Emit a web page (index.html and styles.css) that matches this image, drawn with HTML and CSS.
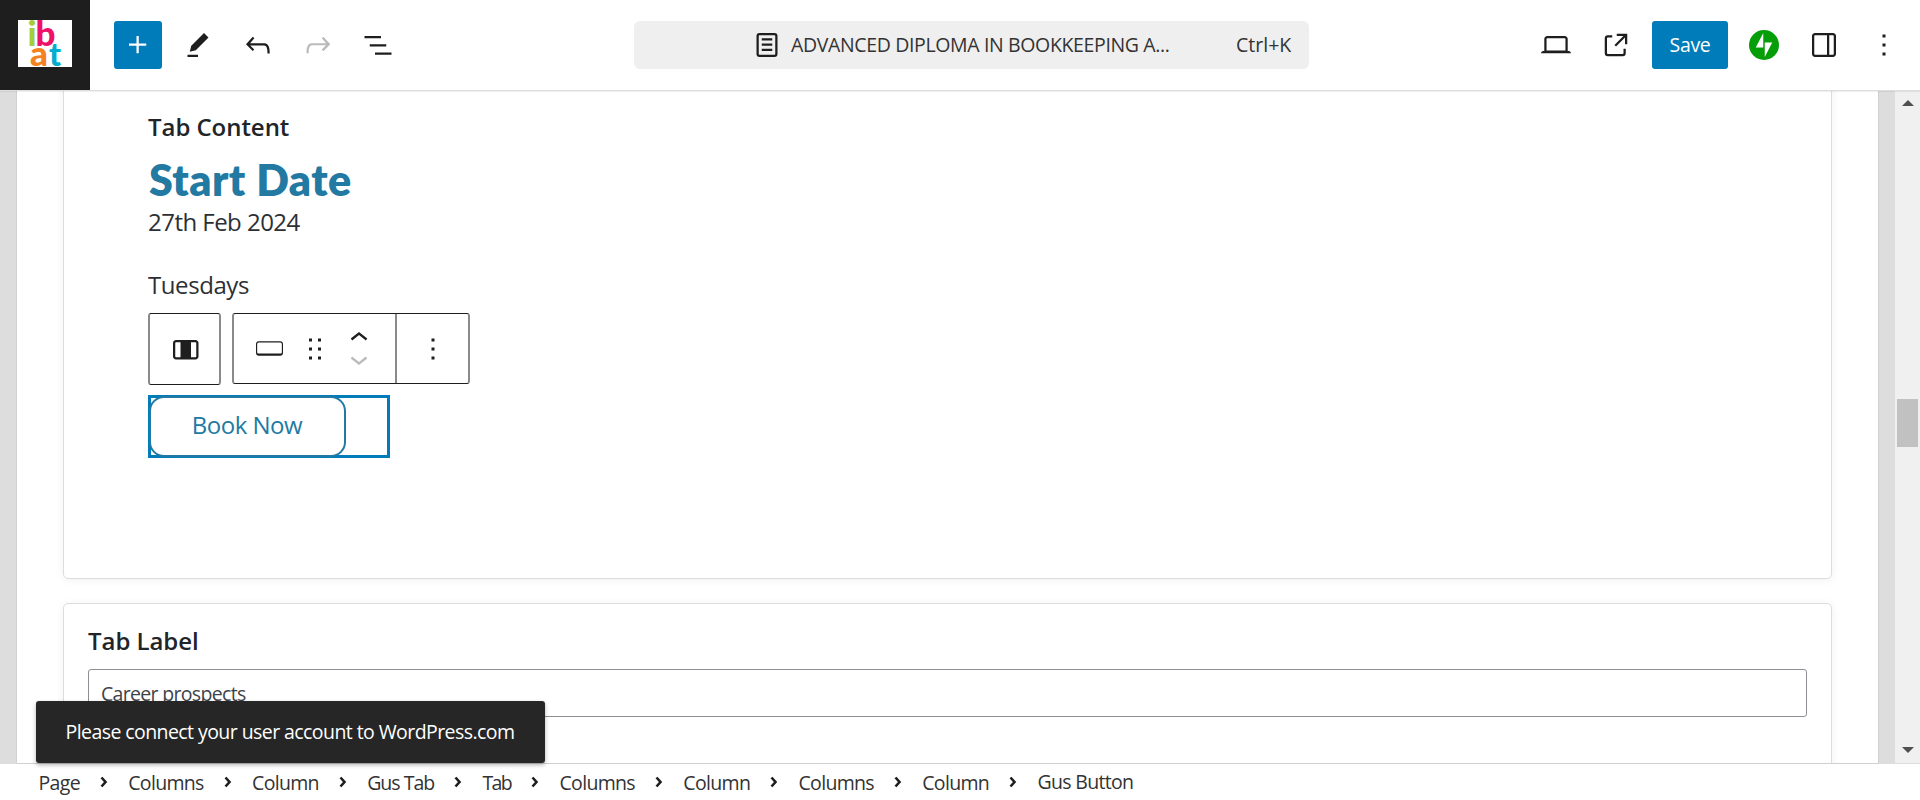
FILE: index.html
```html
<!DOCTYPE html>
<html lang="en">
<head>
<meta charset="utf-8">
<title>Editor</title>
<link rel="stylesheet" href="styles.css">
</head>
<body>
<div class="editor">
  <header class="header">
    <a class="site-logo">
      <svg width="54" height="47" viewBox="0 0 54 47">
        <rect width="54" height="47" fill="#fff"/>
        <g class="logo-letters">
          <text x="9.500" y="26" fill="#a4ce39">i</text>
          <text x="17.500" y="26" fill="#ee1168">b</text>
          <text x="12" y="46" fill="#f58220">a</text>
          <text class="logo-t" x="31" y="46" fill="#00aed0">t</text>
        </g>
      </svg>
    </a>
    <div class="tools">
      <button class="inserter"><svg class="icon" viewBox="0 0 24 24"><path d="M11 12.500V17.500H12.500V12.500H17.500V11H12.500V6H11V11H6V12.500H11Z"/></svg></button>
      <svg class="icon" viewBox="0 0 24 24"><path d="m19 7-3-3-8.500 8.500-1 4 4-1L19 7Zm-7 11.500H5V20h7v-1.500Z"/></svg>
      <svg class="icon" viewBox="0 0 24 24"><path d="M18.300 11.700c-.6-.6-1.400-.9-2.300-.9H6.700l2.900-3.300-1.100-1-4.500 5L8.500 16l1-1-2.700-2.700H16c.5 0 .9.2 1.300.5 1 1 1 3.400 1 4.500v.3h1.500v-.2c0-1.500 0-4.300-1.500-5.700z"/></svg>
      <svg class="icon disabled" viewBox="0 0 24 24"><path d="M15.600 6.500l-1.100 1 2.900 3.300H8c-.9 0-1.700.3-2.300.9-1.400 1.500-1.400 4.200-1.400 5.600v.2h1.500v-.3c0-1.100 0-3.500 1-4.500.3-.3.7-.5 1.300-.5h9.200L14.500 15l1.100 1.100 4.600-4.600-4.600-5z"/></svg>
      <svg class="icon" viewBox="0 0 24 24"><path d="M3 6h11v1.500H3V6Zm3.500 5.500h11V13h-11v-1.500ZM21 17H10v1.500h11V17Z"/></svg>
    </div>
    <div class="command">
      <svg class="icon" viewBox="0 0 24 24"><path d="M15.500 7.500h-7V9h7V7.500Zm-7 3.500h7v1.500h-7V11Zm7 3.500h-7V16h7v-1.500Z"/><path d="M17 4H7a2 2 0 0 0-2 2v12a2 2 0 0 0 2 2h10a2 2 0 0 0 2-2V6a2 2 0 0 0-2-2ZM7 5.500h10a.5.5 0 0 1 .5.5v12a.5.5 0 0 1-.5.5H7a.5.5 0 0 1-.5-.5V6a.5.5 0 0 1 .5-.5Z"/></svg>
      <span class="doc-title">ADVANCED DIPLOMA IN BOOKKEEPING A...</span>
      <span class="shortcut">Ctrl+K</span>
    </div>
    <div class="actions">
      <svg class="icon" viewBox="0 0 24 24"><path d="M20.500 16h-.7V8c0-1.100-.9-2-2-2H6.200c-1.100 0-2 .9-2 2v8h-.7c-.8 0-1.500.7-1.500 1.500h20c0-.8-.7-1.500-1.500-1.500zM5.700 8c0-.3.2-.5.5-.5h11.600c.3 0 .5.2.5.5v7.600H5.700V8z"/></svg>
      <svg class="icon" viewBox="0 0 24 24"><path d="M19.500 4.500h-7V6h4.440l-5.970 5.970 1.060 1.060L18 7.060v4.440h1.500v-7Zm-13 1a2 2 0 0 0-2 2v10a2 2 0 0 0 2 2h10a2 2 0 0 0 2-2v-3H17v3a.5.5 0 0 1-.5.5h-10a.5.5 0 0 1-.5-.5v-10a.5.5 0 0 1 .5-.5h3V5.500h-3Z"/></svg>
      <button class="save"><span>Save</span></button>
      <svg class="jetpack" viewBox="0 0 32 32"><circle cx="16" cy="16" r="16" fill="#069e08"/><path fill="#fff" d="M15.200 18.600H7.200l8-15.500zM16.800 28.900V13.400h8z"/></svg>
      <svg class="icon" viewBox="0 0 24 24"><path d="M18 4H6c-1.100 0-2 .9-2 2v12c0 1.100.9 2 2 2h12c1.100 0 2-.9 2-2V6c0-1.100-.9-2-2-2zm-4 14.500H6c-.3 0-.5-.2-.5-.5V6c0-.3.2-.5.5-.5h8v13zm4.500-.5c0 .3-.2.5-.5.5h-2.500v-13H18c.3 0 .5.2.5.5v12z"/></svg>
      <svg class="icon" viewBox="0 0 24 24"><path d="M13 19h-2v-2h2v2zm0-6h-2v-2h2v2zm0-6h-2V5h2v2z"/></svg>
    </div>
  </header>

  <div class="workspace">
    <main class="canvas">
      <section class="card card-content">
        <div class="label">Tab Content</div>
        <h2 class="heading">Start Date</h2>
        <p class="text date">27th Feb 2024</p>
        <p class="text days">Tuesdays</p>
        <div class="block-toolbar">
          <div class="tb-parent"><svg class="icon" viewBox="0 0 24 24"><path d="M19 6H6c-1.100 0-2 .9-2 2v9c0 1.100.9 2 2 2h13c1.100 0 2-.9 2-2V8c0-1.100-.9-2-2-2zM6 17.500c-.3 0-.5-.2-.5-.5V8c0-.3.2-.5.5-.5h3v10H6zm13.500-.5c0 .3-.2.5-.5.5h-3v-10h3c.3 0 .5.2.5.5v9z"/></svg></div>
          <div class="tb-main">
            <div class="tb-group">
              <svg class="block-icon" width="27" height="15" viewBox="0 0 28 15"><path fill-rule="evenodd" d="M3 0h22a3 3 0 0 1 3 3v9a3 3 0 0 1-3 3H3a3 3 0 0 1-3-3V3a3 3 0 0 1 3-3Zm0 1.200A1.700 1.700 0 0 0 1.200 3v8A1.500 1.500 0 0 0 3 12.600h22a1.500 1.500 0 0 0 1.800-1.600V3A1.700 1.700 0 0 0 25 1.200Z"/></svg>
              <svg class="icon drag" viewBox="0 0 24 24"><path d="M8 7h2V5H8v2zm0 6h2v-2H8v2zm0 6h2v-2H8v2zm6-14v2h2V5h-2zm0 8h2v-2h-2v2zm0 6h2v-2h-2v2z"/></svg>
              <div class="movers">
                <svg width="18" height="9" viewBox="6 8 12 6"><path d="M6.500 12.400L12 8l5.500 4.400-.9 1.200L12 10l-4.500 3.600-1-1.200z"/></svg>
                <svg class="disabled" width="18" height="9" viewBox="6 10 12 6"><path d="M17.500 11.600L12 16l-5.500-4.400.9-1.200L12 14l4.500-3.600 1 1.200z"/></svg>
              </div>
            </div>
            <div class="tb-more"><svg class="icon" viewBox="0 0 24 24"><path d="M13 19h-2v-2h2v2zm0-6h-2v-2h2v2zm0-6h-2V5h2v2z"/></svg></div>
          </div>
        </div>
        <div class="selected-block"><a class="book"><span>Book Now</span></a></div>
      </section>
      <section class="card card-label">
        <div class="label">Tab Label</div>
        <div class="input"><span>Career prospects</span></div>
      </section>
    </main>
    <div class="scrollbar">
      <i class="arrow up"></i>
      <i class="thumb"></i>
      <i class="arrow down"></i>
    </div>
    <div class="toast"><span>Please connect your user account to WordPress.com</span></div>
  </div>

  <footer class="breadcrumbs">
    <span>Page</span><svg class="sep" viewBox="0 0 8 12"><path d="M1.500 1.500L5.500 6l-4 4.500"/></svg>
    <span>Columns</span><svg class="sep" viewBox="0 0 8 12"><path d="M1.500 1.500L5.500 6l-4 4.500"/></svg>
    <span>Column</span><svg class="sep" viewBox="0 0 8 12"><path d="M1.500 1.500L5.500 6l-4 4.500"/></svg>
    <span class="gus-tab">Gus Tab</span><svg class="sep" viewBox="0 0 8 12"><path d="M1.500 1.500L5.500 6l-4 4.500"/></svg>
    <span class="tab">Tab</span><svg class="sep" viewBox="0 0 8 12"><path d="M1.500 1.500L5.500 6l-4 4.500"/></svg>
    <span>Columns</span><svg class="sep" viewBox="0 0 8 12"><path d="M1.500 1.500L5.500 6l-4 4.500"/></svg>
    <span>Column</span><svg class="sep" viewBox="0 0 8 12"><path d="M1.500 1.500L5.500 6l-4 4.500"/></svg>
    <span>Columns</span><svg class="sep" viewBox="0 0 8 12"><path d="M1.500 1.500L5.500 6l-4 4.500"/></svg>
    <span>Column</span><svg class="sep" viewBox="0 0 8 12"><path d="M1.500 1.500L5.500 6l-4 4.500"/></svg>
    <span class="current">Gus Button</span>
  </footer>
</div>
</body>
</html>
```
FILE: styles.css
```css
* { box-sizing: border-box; }

body {
  margin: 0;
  background: #fff;
  color: #1e1e1e;
  font-family: "Open Sans", "Noto Sans", sans-serif;
  font-size: 19.5px;
}

.editor {
  display: flex;
  flex-direction: column;
  width: 1920px;
  height: 800px;
  overflow: hidden;
}

.icon { width: 36px; height: 36px; flex: none; display: block; }
svg { fill: #1e1e1e; flex: none; }
.disabled { fill: #bbb; }
button { border: 0; padding: 0; font: inherit; }

/* Header */
.header {
  display: flex;
  align-items: center;
  height: 91px;
  flex: none;
  border-bottom: 1px solid #ddd;
  position: relative;
  z-index: 1;
  background: #fff;
  box-shadow: 0 1px 1px rgba(0, 0, 0, .06);
}
.site-logo {
  width: 90px;
  height: 90px;
  background: #1e1e1e;
  display: grid;
  place-items: center;
  padding-bottom: 3px;
}
.logo-letters { font: 900 35px/1 Lato, sans-serif; }
.logo-t { font-size: 32px; }
.tools { display: flex; align-items: center; gap: 24px; margin-left: 24px; width: 520px; }
.inserter {
  width: 48px;
  height: 48px;
  background: #007cba;
  border-radius: 3px;
  display: grid;
  place-items: center;
  margin-right: -6px;
}
.inserter .icon { fill: #fff; }
.command {
  width: 675px;
  height: 48px;
  background: #efefef;
  border-radius: 6px;
  display: flex;
  align-items: center;
  padding-left: 115px;
}
.doc-title, .shortcut { color: #333; padding-bottom: 2px; white-space: nowrap; }
.doc-title { margin-left: 6px; width: 445px; letter-spacing: -.36px; }
.actions { display: flex; align-items: center; gap: 24px; margin-left: 229px; }
.save {
  width: 76px;
  height: 48px;
  background: #007cba;
  color: #fff;
  border-radius: 3px;
  margin: 0 -3px 0 -6px;
  padding-bottom: 1px;
  letter-spacing: -.3px;
}
.jetpack { width: 30px; height: 30px; margin-right: 3px; }

/* Canvas */
.workspace {
  flex: 1;
  min-height: 0;
  display: flex;
  position: relative;
  background: #ddd;
}
.canvas {
  width: 1861px;
  margin-left: 17px;
  margin-right: 17px;
  background: #fff;
  padding: 0 46px;
  overflow: hidden;
  box-shadow: 0 0 1px rgba(0, 0, 0, .35);
}
.card {
  border: 1px solid #ddd;
  border-radius: 5px;
  box-shadow: 0 1px 8px rgba(0, 0, 0, .06);
  color: #212529;
}
.card-content { height: 508px; margin-top: -20px; padding: 37px 0 0 84px; }
.label { font-size: 24px; line-height: 36px; font-weight: 600; letter-spacing: -.05px; }
.heading {
  margin: 9px 0 0 1px;
  font: 800 43px/52px Lato, sans-serif;
  letter-spacing: .45px;
  color: #227aa2;
}
.text { margin: 0; font-size: 24px; line-height: 36px; color: #2c3034; }
.date { margin-top: -2px; letter-spacing: -.53px; }
.days { margin-top: 27px; letter-spacing: -.42px; }
.block-toolbar { display: flex; gap: 11px; margin-top: 10px; }
.tb-parent, .tb-main {
  border: solid #8a8a8a;
  border-width: 1px 2px;
  border-top-color: #1e1e1e;
  border-bottom-color: #1e1e1e;
  border-radius: 3px;
}
.tb-parent { width: 73px; height: 72px; display: grid; place-items: center; }
.tb-main { width: 238px; height: 71px; display: flex; }
.tb-group { width: 163px; border-right: 2px solid #8a8a8a; display: flex; align-items: center; padding-left: 22px; }
.drag { margin-left: 13.5px; }
.movers { display: flex; flex-direction: column; gap: 15px; margin-left: 17.5px; }
.tb-more { flex: 1; display: grid; place-items: center; }
.selected-block {
  width: 242px;
  height: 63px;
  margin-top: 10px;
  border: 3px solid #007cba;
  position: relative;
}
.book {
  display: grid;
  place-items: center;
  width: 197px;
  height: 61px;
  margin: -2px 0 0 -2px;
  padding: 0 1px 4px 0;
  border: 2px solid #227aa2;
  border-radius: 15px;
  color: #227aa2;
  font-size: 24px;
  letter-spacing: -.5px;
}
.card-label { margin-top: 24px; height: 240px; padding: 19px 24px; }
.input {
  margin-top: 10px;
  height: 48px;
  border: 1px solid #8c8f94;
  border-radius: 3px;
  padding: 0 12px;
  line-height: 48px;
  color: #3c434a;
  letter-spacing: -.68px;
}

/* Scrollbar */
.scrollbar {
  width: 25px;
  background: #f0f0f0;
  display: flex;
  flex-direction: column;
  align-items: center;
  padding: 9px 0 10px;
}
.arrow { border: solid transparent; border-width: 0 6px; }
.up { border-bottom: 6px solid #505050; }
.down { border-top: 6px solid #505050; margin-top: auto; }
.thumb { width: 21px; height: 48px; background: #c1c1c1; margin-top: 293px; }

/* Snackbar */
.toast {
  position: absolute;
  left: 36px;
  bottom: 0;
  width: 509px;
  height: 62px;
  border-radius: 3px;
  background: #262626;
  color: #fff;
  padding-left: 29.5px;
  line-height: 62px;
  white-space: nowrap;
  letter-spacing: -.57px;
  box-shadow: 0 2px 4px rgba(0, 0, 0, .3);
}

/* Breadcrumbs */
.breadcrumbs {
  height: 37px;
  border-top: 1px solid #ddd;
  display: flex;
  align-items: center;
  padding-left: 38.5px;
  flex: none;
  color: #333;
  letter-spacing: -.67px;
}
.sep { width: 8px; height: 12px; margin: 0 20.15px 1px; fill: none; stroke: #1e1e1e; stroke-width: 2.6; }
.gus-tab { letter-spacing: -1px; }
.tab { letter-spacing: -1.6px; }
.current { padding-bottom: 1px; }
```
